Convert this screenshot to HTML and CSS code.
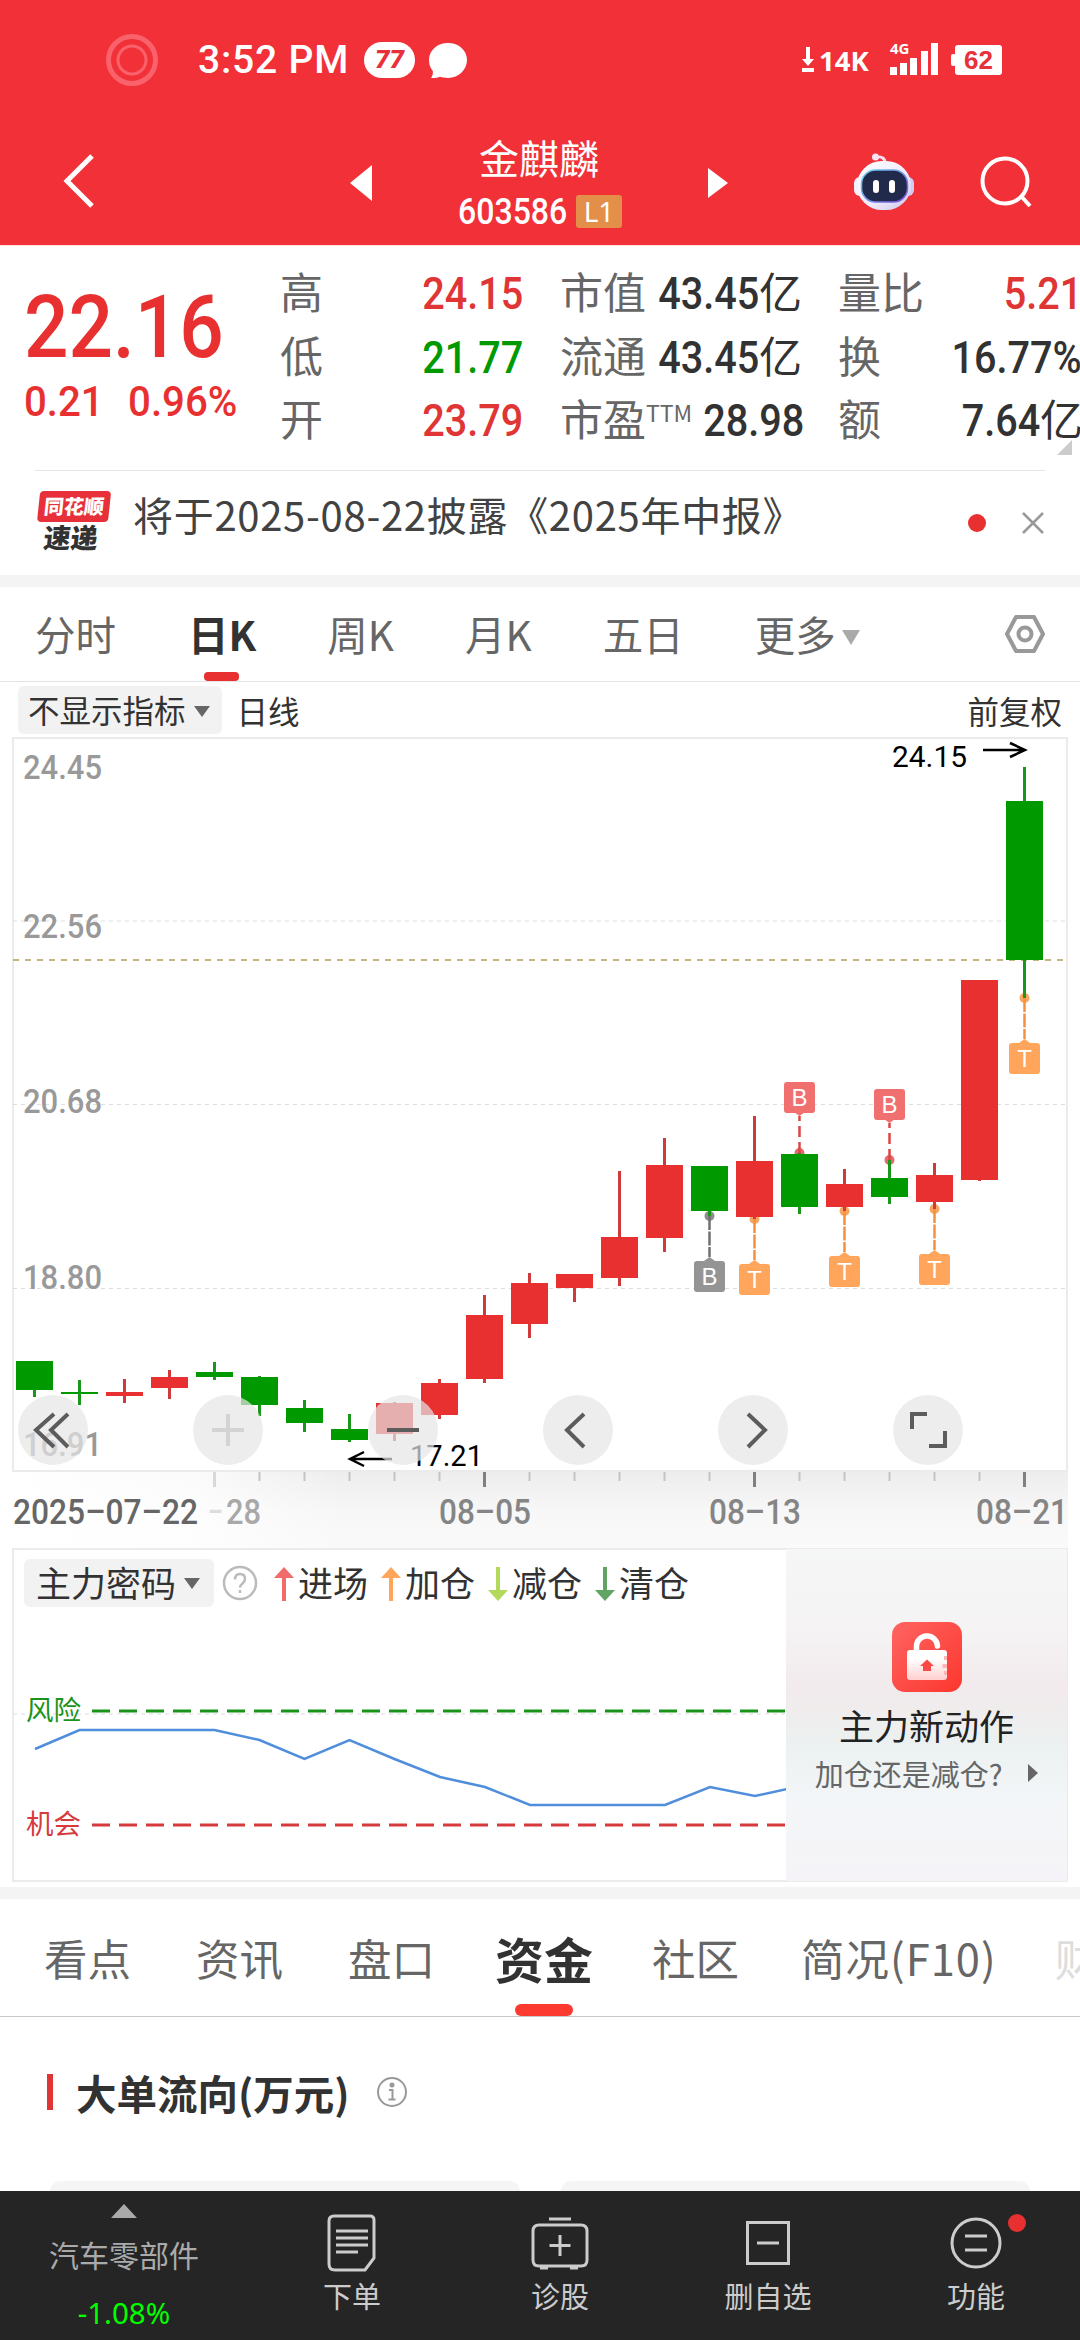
FILE: index.html
```html
<!DOCTYPE html>
<html lang="zh-CN">
<head>
<meta charset="UTF-8" />
<meta name="viewport" content="width=device-width, initial-scale=1" />
<title>金麒麟 603586</title>
<link rel="stylesheet" href="styles.css">
</head>
<body>

<header class="top">
  <div class="status">
    <svg class="ring" width="54" height="54" viewBox="0 0 54 54" fill="none" stroke="#f9626a">
      <circle cx="27" cy="27" r="23.5" stroke-width="5"/>
      <circle cx="27" cy="27" r="14" stroke-width="3"/>
    </svg>
    <span class="time">3:52 PM</span>
    <span class="pill">77</span>
    <svg class="bubble" width="40" height="37" viewBox="0 0 40 37" fill="#fff">
      <path d="M20 1C31 1 39 8.500 39 18s-8 18-19 18c-3 0-6-.6-8-1.200-2 .9-6 1.600-9 1.200 1.500-2 2.200-4.500 1.800-7C2.200 26 1 22 1 18 1 8.500 9 1 20 1z"/>
    </svg>
    <div class="status-right">
      <svg width="14" height="28" viewBox="0 0 14 28" fill="#fff">
        <path d="M5 1h4v12h4l-6 7-6-7h4zM1 22h12v4H1z"/>
      </svg>
      <span class="speed">14K</span>
      <div class="signal">
        <span>4G</span>
        <svg width="50" height="34" viewBox="0 0 50 34" fill="#fff">
          <path d="M0 26h7v8H0zM10 22h7v12h-7zM20 17h7v17h-7zM31 10h7v24h-7zM41 2h7v32h-7z"/>
        </svg>
      </div>
      <span class="battery">62</span>
    </div>
  </div>
  <nav class="nav">
    <svg class="back" width="40" height="60" viewBox="0 0 40 60" fill="none" stroke="#fff" stroke-width="5">
      <path d="M31 3L6 28l25 25"/>
    </svg>
    <svg class="prev" width="24" height="36" viewBox="0 0 24 36" fill="#fff"><path d="M23 0v36L1 18z"/></svg>
    <div class="stock">
      <div class="stock-name">金麒麟</div>
      <div class="stock-code"><span class="code">603586</span><span class="level">L1</span></div>
    </div>
    <svg class="next" width="22" height="32" viewBox="0 0 22 32" fill="#fff"><path d="M1 1v30l20-15z"/></svg>
    <svg class="robot" width="62" height="60" viewBox="0 0 62 60">
      <defs>
        <linearGradient id="shell" x1="0" y1="0" x2="1" y2="1">
          <stop offset="0" stop-color="#fff"/><stop offset=".6" stop-color="#eeeafa"/><stop offset="1" stop-color="#c9c6ee"/>
        </linearGradient>
        <linearGradient id="rim" x1="0" y1="0" x2="1" y2="1">
          <stop offset="0" stop-color="#6fd6ee"/><stop offset="1" stop-color="#7a4be0"/>
        </linearGradient>
      </defs>
      <path d="M23 4q9-1 9 6" fill="none" stroke="#f3dff0" stroke-width="3"/>
      <circle cx="22.500" cy="4" r="3.500" fill="#f6e4f0"/>
      <rect x="1" y="24" width="12" height="19" rx="6" fill="#f3effc"/>
      <rect x="49" y="24" width="12" height="19" rx="6" fill="#cfcdf3"/>
      <rect x="4" y="8" width="54" height="49" rx="25" fill="url(#shell)"/>
      <rect x="8.500" y="17" width="46" height="32" rx="14" fill="#222a4b" stroke="url(#rim)" stroke-width="1.500"/>
      <rect x="20" y="27" width="6" height="13" rx="3" fill="#fff"/>
      <rect x="36" y="27" width="6" height="13" rx="3" fill="#fff"/>
    </svg>
    <svg class="search" width="54" height="56" viewBox="0 0 54 56" fill="none" stroke="#fff" stroke-width="4">
      <circle cx="26" cy="26" r="22.500"/><path d="M42 41l9 10"/>
    </svg>
  </nav>
</header>

<section class="quote">
  <div class="price-box">
    <div class="price">22.16</div>
    <div class="change"><span>0.21</span><span>0.96%</span></div>
  </div>
  <div class="stats">
    <div class="stat"><label>高</label><b class="red">24.15</b></div>
    <div class="stat"><label>市值</label><span><b>43.45</b>亿</span></div>
    <div class="stat"><label>量比</label><b class="red">5.21</b></div>
    <div class="stat"><label>低</label><b class="green">21.77</b></div>
    <div class="stat"><label>流通</label><span><b>43.45</b>亿</span></div>
    <div class="stat"><label>换</label><b>16.77%</b></div>
    <div class="stat"><label>开</label><b class="red">23.79</b></div>
    <div class="stat"><label>市盈<sup>TTM</sup></label><b>28.98</b></div>
    <div class="stat"><label>额</label><span><b>7.64</b>亿</span></div>
  </div>
  <i class="corner"></i>
</section>

<section class="news">
  <div class="news-logo">
    <span class="logo-top">同花顺</span>
    <span class="logo-bottom">速递</span>
  </div>
  <p>将于2025-08-22披露《2025年中报》</p>
  <i class="dot"></i>
  <svg width="22" height="22" viewBox="0 0 22 22" stroke="#999" stroke-width="2.500"><path d="M1 1l20 20M21 1L1 21"/></svg>
</section>

<div class="period-tabs">
  <span>分时</span>
  <span class="active">日K</span>
  <span>周K</span>
  <span>月K</span>
  <span>五日</span>
  <span>更多<i class="caret"></i></span>
  <svg class="gear" width="42" height="42" viewBox="0 0 42 42" fill="none" stroke="#999" stroke-width="4" stroke-linejoin="round">
    <path d="M12 4h18l9 17-9 17H12L3 21z"/><circle cx="21" cy="21" r="6.500"/>
  </svg>
</div>

<div class="indicator">
  <span class="chip">不显示指标<i class="caret"></i></span>
  <span>日线</span>
  <span class="adjust">前复权</span>
</div>

<section class="kline">
  <svg id="chart" width="1080" height="811" viewBox="0 737 1080 811">
    <defs>
      <linearGradient id="fadeDown" x1="0" y1="0" x2="0" y2="1">
        <stop offset="0" stop-color="#ededed"/><stop offset=".5" stop-color="#f7f7f7"/><stop offset="1" stop-color="#fafafa"/>
      </linearGradient>
      <linearGradient id="fadeLeft" x1="0" y1="0" x2="1" y2="0">
        <stop offset="0" stop-color="#fff"/><stop offset=".55" stop-color="#fff" stop-opacity=".75"/><stop offset="1" stop-color="#fff" stop-opacity="0"/>
      </linearGradient>
    </defs>
    <rect x="13" y="1472" width="1055" height="76" fill="url(#fadeDown)"/>
    <rect x="13" y="1472" width="330" height="76" fill="url(#fadeLeft)"/>
    <rect x="13" y="738" width="1054" height="733" fill="none" stroke="#ebebeb" stroke-width="2"/>
    <path d="M13 921H1067M13 1104.500H1067M13 1288.500H1067" stroke="#dedede" stroke-dasharray="4 4"/>
    <path d="M13 960H1067" stroke="#b0a055" stroke-width="1.500" stroke-dasharray="6 6"/>
    <g class="scale">
      <text x="23" y="779" textLength="79" lengthAdjust="spacingAndGlyphs">24.45</text>
      <text x="23" y="938" textLength="79" lengthAdjust="spacingAndGlyphs">22.56</text>
      <text x="23" y="1113" textLength="79" lengthAdjust="spacingAndGlyphs">20.68</text>
      <text x="23" y="1289" textLength="79" lengthAdjust="spacingAndGlyphs">18.80</text>
      <text x="23" y="1456" textLength="79" lengthAdjust="spacingAndGlyphs">16.91</text>
    </g>
    <g id="candles"></g>
    <g class="extreme">
      <text x="892" y="767" textLength="75" lengthAdjust="spacingAndGlyphs">24.15</text>
      <path d="M983 750h41M1010 743l15 7-15 7"/>
      <text x="410" y="1466" textLength="73" lengthAdjust="spacingAndGlyphs">17.21</text>
      <path d="M392 1459h-41M364 1452l-14 7 14 7"/>
    </g>
    <g id="ticks"></g>
    <g class="dates">
      <text class="first" x="13" y="1524" textLength="185" lengthAdjust="spacingAndGlyphs">2025–07–22</text>
      <text class="faint" x="208" y="1524" textLength="15" lengthAdjust="spacingAndGlyphs">–</text>
      <text class="half" x="226" y="1524" textLength="35" lengthAdjust="spacingAndGlyphs">28</text>
      <text x="439" y="1524" textLength="92" lengthAdjust="spacingAndGlyphs">08–05</text>
      <text x="709" y="1524" textLength="92" lengthAdjust="spacingAndGlyphs">08–13</text>
      <text x="976" y="1524" textLength="92" lengthAdjust="spacingAndGlyphs">08–21</text>
    </g>
  </svg>
  <div class="controls">
    <button><svg viewBox="0 0 70 70"><path d="M36 19L18 35l18 17M50 19L33 35l17 17"/></svg></button>
    <button class="disabled"><svg viewBox="0 0 70 70"><path d="M35 19v32M19 35h32"/></svg></button>
    <button><svg viewBox="0 0 70 70"><path d="M19 35h32"/></svg></button>
    <button><svg viewBox="0 0 70 70"><path d="M41 19L24 35l17 17"/></svg></button>
    <button><svg viewBox="0 0 70 70"><path d="M30 19l17 16-17 17"/></svg></button>
    <button><svg viewBox="0 0 70 70"><path d="M19 34V19h15M36 51h16V36"/></svg></button>
  </div>
</section>

<section class="signals">
  <div class="signals-main">
    <div class="legend">
      <span class="chip">主力密码<i class="caret"></i></span>
      <svg class="help" width="36" height="36" viewBox="0 0 36 36" fill="none" stroke="#bbb" stroke-width="2.500">
        <circle cx="18" cy="18" r="16"/><path d="M13 14.500q0-5.500 5-5.500t5 5q0 2.500-2.500 4.500T18 22.500M18 25v3"/>
      </svg>
      <span class="key"><svg width="20" height="34" viewBox="0 0 20 34" fill="#f26b6b"><path d="M10 0l10 11h-8v23H8V11H0z"/></svg>进场</span>
      <span class="key"><svg width="20" height="34" viewBox="0 0 20 34" fill="#ffa55c"><path d="M10 0l10 11h-8v23H8V11H0z"/></svg>加仓</span>
      <span class="key"><svg width="20" height="34" viewBox="0 0 20 34" fill="#b3d95c"><path d="M10 34l10-11h-8V0H8v23H0z"/></svg>减仓</span>
      <span class="key"><svg width="20" height="34" viewBox="0 0 20 34" fill="#5fa463"><path d="M10 34l10-11h-8V0H8v23H0z"/></svg>清仓</span>
    </div>
    <svg class="trend" width="773" height="260" viewBox="13 1620 773 260" fill="none">
      <path d="M13 1714H786" stroke="#dcdcdc" stroke-dasharray="4 4"/>
      <path d="M92 1711H785" stroke="#1a931a" stroke-width="3" stroke-dasharray="18 9"/>
      <path d="M92 1825H785" stroke="#d63a3a" stroke-width="3" stroke-dasharray="18 9"/>
      <polyline points="35,1749 79.500,1730 214.500,1730 259.500,1740 304.500,1759 349.500,1740 394.500,1759 440,1777 485,1787 530,1805 665,1805 710,1787 755,1796 787,1789" stroke="#4f8edc" stroke-width="2.500"/>
      <text x="26" y="1720" fill="#1a931a">风险</text>
      <text x="26" y="1834" fill="#d63a3a">机会</text>
    </svg>
  </div>
  <div class="promo">
    <svg width="70" height="70" viewBox="0 0 70 70">
      <defs>
        <linearGradient id="redTile" x1="0" y1="0" x2="1" y2="1">
          <stop offset="0" stop-color="#ff6462"/><stop offset="1" stop-color="#fb372e"/>
        </linearGradient>
        <linearGradient id="lockBody" x1="0" y1="0" x2="0" y2="1">
          <stop offset=".3" stop-color="#fff"/><stop offset="1" stop-color="#ffcfce"/>
        </linearGradient>
      </defs>
      <rect width="70" height="70" rx="13" fill="url(#redTile)"/>
      <path d="M24.500 30v-5a10.500 10.500 0 0 1 21-1" fill="none" stroke="#fff" stroke-width="5.500" stroke-linecap="round"/>
      <rect x="15" y="28" width="40" height="30" rx="3" fill="url(#lockBody)"/>
      <path d="M35 37.500l7 6.500h-3v5h-8v-5h-3z" fill="#fb4a45"/>
      <path d="M52 36h3M50.500 44h4.500M52 51h3" stroke="#ffb5b3" stroke-width="4"/>
    </svg>
    <div class="promo-title">主力新动作</div>
    <div class="promo-sub"><span>加仓还是减仓?</span><i></i></div>
  </div>
</section>

<div class="info-tabs">
  <span>看点</span>
  <span>资讯</span>
  <span>盘口</span>
  <span class="active">资金</span>
  <span>社区</span>
  <span class="wide">简况(F10)</span>
  <span class="cut">财</span>
</div>

<section class="flow">
  <h2>大单流向(万元)
    <svg width="32" height="32" viewBox="0 0 32 32" fill="none" stroke="#999" stroke-width="2">
      <circle cx="16" cy="16" r="14"/><path d="M13 14h3.500v9M12.500 23.500h7"/><circle cx="16" cy="9" r="1.500" fill="#999"/>
    </svg>
  </h2>
  <div class="cards"><div></div><div></div></div>
</section>

<footer class="bottom">
  <div class="sector">
    <i></i>
    <span>汽车零部件</span>
    <em>-1.08%</em>
  </div>
  <div class="action">
    <svg width="60" height="60" viewBox="0 0 60 60"><path d="M12 3h36q4 0 4 4v38L43 57H13q-6 0-6-6V8q0-5 5-5zM14 18h32M14 25h32M14 32h32M14 39h22"/></svg>
    <span>下单</span>
  </div>
  <div class="action">
    <svg width="60" height="60" viewBox="0 0 60 60"><path d="M9 12h42q6 0 6 6v29q0 6-6 6H9q-6 0-6-6V18q0-6 6-6zM19 6h22M10 55h8M40 55h8M30 22v21M19.500 32.500h21"/></svg>
    <span>诊股</span>
  </div>
  <div class="action">
    <svg width="60" height="60" viewBox="0 0 60 60"><path d="M9.500 9.500h41v41h-41zM19 30h22"/></svg>
    <span>删自选</span>
  </div>
  <div class="action">
    <svg width="60" height="60" viewBox="0 0 60 60"><circle cx="30" cy="30" r="24"/><path d="M19 23h22M19 37h22"/></svg>
    <span>功能</span>
    <i class="badge"></i>
  </div>
</footer>

<script>
  const RED = '#e83030';
  const GREEN = '#009a00';

  // [color, high, body top, body bottom, low]
  const candles = [
    ['g', 1361, 1361, 1390, 1397],
    ['g', 1380, 1392, 1394, 1405],
    ['r', 1379, 1392, 1396, 1403],
    ['r', 1370, 1377, 1388, 1399],
    ['g', 1362, 1372, 1377, 1380],
    ['g', 1376, 1377, 1405, 1416],
    ['g', 1400, 1408, 1423, 1432],
    ['g', 1414, 1429, 1440, 1442],
    ['r', 1402, 1403, 1434, 1441],
    ['r', 1379, 1383, 1415, 1419],
    ['r', 1295, 1315, 1379, 1383],
    ['r', 1273, 1283, 1324, 1338],
    ['r', 1274, 1274, 1288, 1302],
    ['r', 1171, 1237, 1278, 1286],
    ['r', 1138, 1165, 1238, 1252],
    ['g', 1166, 1166, 1211, 1216],
    ['r', 1116, 1161, 1217, 1219],
    ['g', 1153, 1154, 1207, 1214],
    ['r', 1169, 1184, 1207, 1211],
    ['g', 1160, 1178, 1197, 1204],
    ['r', 1163, 1175, 1202, 1209],
    ['r', 980, 980, 1180, 1181],
    ['g', 767, 801, 960, 998]
  ];

  // [candle index, letter, dot y, direction, box color, line color]
  const markers = [
    [15, 'B', 1216, 1, '#949494', '#707070'],
    [16, 'T', 1219, 1, '#ffa55c', '#f5913c'],
    [17, 'B', 1153, -1, '#f07070', '#dc4545'],
    [18, 'T', 1211, 1, '#ffa55c', '#f5913c'],
    [19, 'B', 1160, -1, '#f07070', '#dc4545'],
    [20, 'T', 1209, 1, '#ffa55c', '#f5913c'],
    [22, 'T', 998, 1, '#ffa55c', '#f5913c']
  ];

  const xOf = i => 34.5 + i * 45;
  let out = '';

  markers.forEach(([i, letter, y, dir, fill, line]) => {
    const x = xOf(i);
    const tip = dir > 0 ? y + 41 : y - 37;
    const base = tip + dir * 4;
    const top = dir > 0 ? base : base - 30;
    out += `<circle cx="${x}" cy="${y}" r="5" fill="${line}" opacity=".8"/>`;
    out += `<path d="M${x} ${y}V${tip}" stroke="${line}" stroke-width="2.500" stroke-dasharray="${dir > 0 ? '14 1.500' : '11 5'}"/>`;
    out += `<path d="M${x} ${tip}l7 ${dir * 5}h-14z" fill="${fill}"/>`;
    out += `<rect x="${x - 15.5}" y="${top}" width="31" height="31" rx="3" fill="${fill}"/>`;
    out += `<text class="mark" x="${x}" y="${top + 24}">${letter}</text>`;
  });

  candles.forEach(([c, high, top, bottom, low], i) => {
    const x = xOf(i);
    const fill = c === 'r' ? RED : GREEN;
    out += `<rect x="${x - 1.5}" y="${high}" width="3" height="${low - high}" fill="${c === 'r' ? '#cf3b3b' : '#1a961a'}"/>`;
    out += `<rect x="${x - 18.5}" y="${top}" width="37" height="${bottom - top}" fill="${fill}"/>`;
  });
  document.getElementById('candles').innerHTML = out;

  let ticks = '';
  for (let i = 4; i <= 22; i++) {
    const major = [4, 10, 16, 22].includes(i);
    const color = i === 4 ? '#d8d8d8' : major ? '#808080' : '#c4c4c4';
    ticks += `<path d="M${xOf(i)} 1472v${major ? 15 : 9}" stroke="${color}" stroke-width="${major ? 3 : 2}"/>`;
  }
  document.getElementById('ticks').innerHTML = ticks;
</script>

</body>
</html>
```
FILE: styles.css
```css
* {
  box-sizing: border-box;
}
body {
  margin: 0;
  width: 1080px;
  height: 2340px;
  overflow: hidden;
  background: #fff;
  color: #323232;
  font-family: 'Noto Sans CJK SC', sans-serif;
  display: flex;
  flex-direction: column;
}
svg {
  display: block;
  flex: none;
}
i, em {
  font-style: normal;
}

/* header */
.top {
  height: 246px;
  flex: none;
  background: #f13038;
  border-bottom: 1px solid #ffe0e0;
  color: #fff;
}
.status {
  height: 120px;
  display: flex;
  align-items: center;
  padding: 0 78px 0 105px;
}
.time {
  width: 164px;
  margin-left: 39px;
  font: 500 39px Roboto, sans-serif;
  letter-spacing: .8px;
  white-space: nowrap;
}
.pill {
  width: 51px;
  height: 36px;
  margin-left: 2px;
  border-radius: 18px;
  background: #fff;
  color: #e8303a;
  font: italic 900 26px/35px Roboto, sans-serif;
  text-align: center;
}
.bubble {
  margin-left: 13px;
}
.status-right {
  margin-left: auto;
  display: flex;
  align-items: center;
}
.speed {
  width: 65px;
  padding-left: 4px;
  font: 700 27.500px 'Noto Sans', sans-serif;
}
.signal {
  width: 65px;
  height: 34px;
  margin-left: 10px;
  margin-top: -4px;
  position: relative;
}
.signal span {
  position: absolute;
  left: 0;
  top: 0;
  font: 700 15px/15px 'Noto Sans', sans-serif;
}
.battery {
  width: 47px;
  height: 30px;
  border-radius: 3px;
  background: #fff;
  color: #e8303a;
  font: 700 26px/31px 'Liberation Sans', sans-serif;
  text-align: center;
  position: relative;
}
.battery::before {
  content: '';
  position: absolute;
  left: -4px;
  top: 9px;
  width: 5px;
  height: 12px;
  border-radius: 2px;
  background: #fff;
}
.nav {
  height: 125px;
  display: flex;
  align-items: center;
  padding-left: 61px;
}
.prev {
  margin-left: 248px;
}
.stock {
  width: 224px;
  margin: 0 58px 0 54px;
  text-align: center;
}
.stock-name {
  font-size: 40px;
  line-height: 52px;
  margin-top: 6px;
}
.stock-code {
  display: flex;
  align-items: center;
  justify-content: center;
  height: 58px;
}
.code {
  width: 118px;
  font: 500 36px/54px Roboto, sans-serif;
  text-align: left;
  transform: scaleX(.89);
  transform-origin: left;
  margin-left: 2px;
}
.level {
  width: 46px;
  height: 33px;
  background: #e38f4a;
  border-radius: 3px;
  font: 28px/33px 'Noto Sans', sans-serif;
}
.next {
  margin-left: -2px;
}
.robot {
  margin-left: 124px;
}
.search {
  margin-left: 64px;
}

/* quote */
.quote {
  height: 225px;
  flex: none;
  display: flex;
  position: relative;
}
.quote::after {
  content: '';
  position: absolute;
  left: 35px;
  right: 35px;
  bottom: 0;
  height: 1px;
  background: #e6e6e6;
}
.price-box {
  width: 280px;
  flex: none;
  padding: 35px 0 0 24px;
  color: #e83030;
  font-family: Roboto, sans-serif;
  font-weight: 500;
}
.price {
  font-size: 88px;
  line-height: 92px;
  transform: scaleX(.89);
  transform-origin: left;
}
.change {
  display: flex;
  gap: 26px;
  width: 260px;
  font-size: 43px;
  line-height: 56px;
  transform: scaleX(.935);
  transform-origin: left;
  white-space: nowrap;
}
.stats {
  display: grid;
  grid-template-columns: 243px 241px 244px;
  grid-auto-rows: 63.500px;
  column-gap: 37px;
  padding-top: 13px;
}
.stat {
  display: flex;
  justify-content: space-between;
  align-items: baseline;
  font-size: 43px;
  line-height: 63px;
  white-space: nowrap;
}
.stat label {
  color: #666;
}
.stat b {
  display: inline-block;
  font: 500 44px/63px Roboto, sans-serif;
  transform: scaleX(.9);
  transform-origin: right;
}
.stat span {
  letter-spacing: -1px;
}
.stat span b {
  letter-spacing: 0;
}
sup {
  font-size: 23px;
  line-height: 1;
  vertical-align: 14px;
}
.red {
  color: #e03535;
}
.green {
  color: #009a00;
}
.corner {
  position: absolute;
  right: 8px;
  bottom: 16px;
  border-left: 15px solid transparent;
  border-bottom: 15px solid #ccc;
}

/* news */
.news {
  height: 116px;
  flex: none;
  border-bottom: 12px solid #f4f4f4;
  display: flex;
  align-items: center;
  padding: 0 36px 0 36px;
}
.news-logo {
  width: 73px;
  margin-top: -3px;
  display: flex;
  flex-direction: column;
  align-items: center;
  transform: skewX(-6deg);
}
.logo-top {
  width: 71px;
  height: 31px;
  border-radius: 4px;
  background: #e8303a;
  color: #fff;
  font-size: 20px;
  font-weight: 900;
  line-height: 29px;
  text-align: center;
}
.logo-bottom {
  font-size: 27px;
  font-weight: 900;
  line-height: 30px;
}
.news p {
  margin: -18px 0 0 24px;
  font-size: 40px;
  letter-spacing: .7px;
  color: #424242;
  flex: 1;
  white-space: nowrap;
}
.dot {
  width: 18px;
  height: 18px;
  border-radius: 50%;
  background: #e83030;
  margin-right: 36px;
}

/* period tabs */
.period-tabs {
  height: 95px;
  flex: none;
  border-bottom: 1px solid #e4e4e4;
  display: flex;
  align-items: center;
  padding: 0 34px 0 35px;
  font-size: 40.500px;
  color: #666;
}
.period-tabs span {
  line-height: 94px;
  position: relative;
  margin-right: 71px;
}
.period-tabs .active {
  margin-left: 1px;
  font-weight: 700;
  color: #323232;
}
.period-tabs .active::after {
  content: '';
  position: absolute;
  left: 50%;
  bottom: 0;
  width: 35px;
  height: 9px;
  margin-left: -18px;
  border-radius: 4px;
  background: #e83030;
}
.gear {
  margin-left: auto;
}
.caret {
  display: inline-block;
  border: 8px solid transparent;
  border-top: 11px solid #666;
  border-bottom: 0;
  margin-left: 8px;
  vertical-align: 6px;
}
.period-tabs .caret {
  border-width: 15px 9px 0;
  border-top-color: #aaa;
  margin-left: 6px;
}
.indicator {
  height: 55px;
  flex: none;
  display: flex;
  align-items: center;
  padding: 0 18px;
  font-size: 31.500px;
}
.chip {
  height: 48px;
  line-height: 46px;
  padding: 0 12px 0 10px;
  border-radius: 6px;
  background: #f2f2f2;
  margin-right: 15px;
  white-space: nowrap;
}
.adjust {
  margin-left: auto;
}

/* k line chart */
.kline {
  height: 811px;
  flex: none;
  position: relative;
}
.scale text {
  font: 500 33px Roboto, sans-serif;
  fill: #999;
}
.mark {
  font: 24px 'Liberation Sans', sans-serif;
  fill: #fff;
  text-anchor: middle;
}
.extreme text {
  font: 29px Roboto, sans-serif;
  fill: #000;
}
.extreme path {
  fill: none;
  stroke: #000;
  stroke-width: 2.500;
}
.dates text {
  font: 500 35px Roboto, sans-serif;
  fill: #858585;
}
.dates .first {
  fill: #666;
}
.dates .faint {
  fill: #ddd;
}
.dates .half {
  fill: #a8a8a8;
}
.controls {
  position: absolute;
  left: 18px;
  top: 658px;
  width: 945px;
  display: flex;
  justify-content: space-between;
}
.controls button {
  width: 70px;
  height: 70px;
  padding: 0;
  border: none;
  border-radius: 50%;
  background: rgba(229, 229, 229, .7);
}
.controls path {
  fill: none;
  stroke: #5c5c5c;
  stroke-width: 4;
}
.controls .disabled path {
  stroke: #d3d3d3;
}

/* signal panel */
.signals {
  height: 334px;
  flex: none;
  width: 1056px;
  margin-left: 12px;
  border: 2px solid #ebebeb;
  display: flex;
}
.signals-main {
  width: 773px;
}
.legend {
  height: 66px;
  margin-bottom: 4px;
  display: flex;
  align-items: center;
  padding-left: 10px;
  font-size: 35px;
  line-height: 46px;
}
.legend .chip {
  width: 190px;
  padding-left: 12px;
  margin-right: 8px;
}
.legend .caret {
  margin-left: 8px;
  vertical-align: 8px;
}
.help {
  margin-right: 16px;
}
.key {
  width: 107px;
  height: 48px;
  display: flex;
  gap: 4px;
  white-space: nowrap;
}
.key svg {
  margin-top: 8px;
}
.trend {
  margin-left: -1px;
}
.trend text {
  font-size: 27.500px;
}
.promo {
  flex: 1;
  margin: -1px;
  background: linear-gradient(#f5f6f6 0, #f5f3f4 25%, #f2eaec 42%, #efeded 50%, #ecf1f1 60%, #f3f6f8 75%, #f5f3f7 100%);
  display: flex;
  flex-direction: column;
  align-items: center;
  padding-top: 73px;
}
.promo-title {
  font-size: 35px;
  line-height: 50px;
  margin-top: 8px;
  color: #222;
}
.promo-sub {
  display: flex;
  align-items: center;
  gap: 26px;
  font-size: 29px;
  line-height: 46px;
  color: #666;
}
.promo-sub i {
  border: 9px solid transparent;
  border-left: 10px solid #666;
  border-right: 0;
}

/* info tabs */
.info-tabs {
  height: 130px;
  flex: none;
  margin-top: 5px;
  border-top: 12px solid #f4f4f4;
  border-bottom: 1px solid #c8c8c8;
  display: flex;
  gap: 65px;
  padding-left: 44px;
  font-size: 43.500px;
  line-height: 117px;
  color: #666;
  white-space: nowrap;
}
.info-tabs .active {
  position: relative;
  margin: 0 -6px 0 -5px;
  font-size: 49px;
  font-weight: 700;
  color: #323232;
}
.info-tabs .active::after {
  content: '';
  position: absolute;
  left: 50%;
  bottom: 0;
  width: 58px;
  height: 12px;
  margin-left: -29px;
  border-radius: 6px;
  background: #fc3a30;
}
.info-tabs .wide {
  margin-left: -3px;
  letter-spacing: 1px;
}
.info-tabs .cut {
  margin-left: -7px;
  color: #ddd;
}

/* fund flow */
.flow {
  height: 174px;
  flex: none;
  padding: 57px 50px 0;
}
.flow h2 {
  display: flex;
  align-items: center;
  height: 36px;
  margin: 0 0 0 -3px;
  padding-left: 23px;
  border-left: 6px solid #e03535;
  font-size: 40.500px;
  font-weight: 700;
  white-space: nowrap;
}
.flow h2 svg {
  margin-left: 26px;
}
.cards {
  display: flex;
  gap: 41px;
  margin-top: 71px;
}
.cards div {
  flex: 1;
  height: 10px;
  border-radius: 18px 18px 0 0;
  background: #f5f5f5;
}

/* bottom bar */
.bottom {
  height: 149px;
  flex: none;
  background: #252525;
  color: #ccc;
  display: flex;
  font-size: 29px;
}
.sector {
  width: 248px;
  display: flex;
  flex-direction: column;
  align-items: center;
  padding-top: 13px;
  color: #aaa;
}
.sector i {
  border: 13px solid transparent;
  border-bottom: 14px solid #aaa;
  border-top: 0;
}
.sector span {
  font-size: 30px;
  line-height: 44px;
  margin-top: 14px;
}
.sector em {
  font: 29.500px/40px 'Noto Sans', sans-serif;
  color: #0f0;
  margin-top: 17px;
}
.action {
  width: 208px;
  display: flex;
  flex-direction: column;
  align-items: center;
  padding-top: 22px;
  position: relative;
}
.action svg {
  fill: none;
  stroke: #ccc;
  stroke-width: 3;
}
.action span {
  line-height: 44px;
}
.badge {
  position: absolute;
  right: 54px;
  top: 23px;
  width: 18px;
  height: 18px;
  border-radius: 50%;
  background: #e83030;
}
```
